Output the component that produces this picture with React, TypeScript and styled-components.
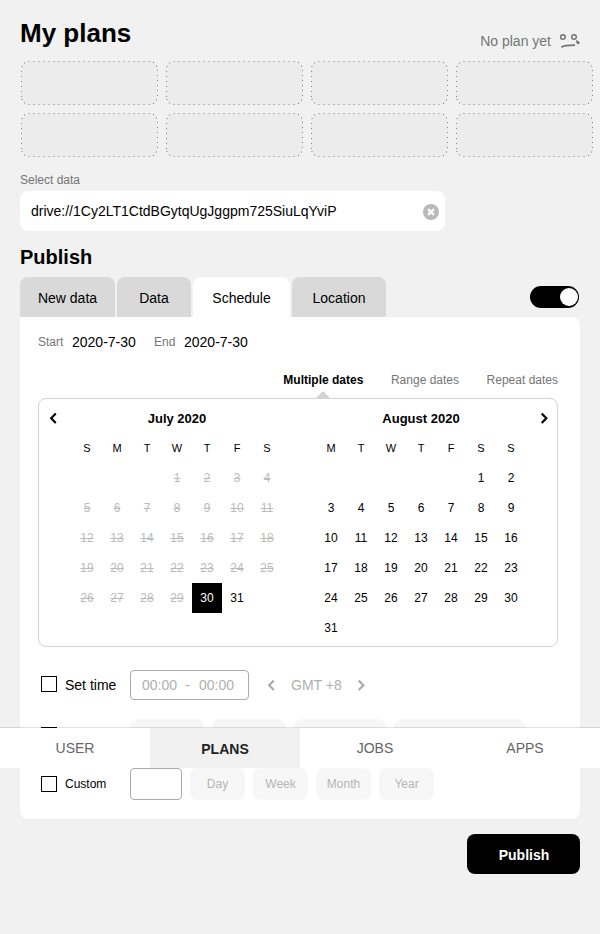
import React from 'react';
import styled, { createGlobalStyle } from 'styled-components';

const GlobalStyle = createGlobalStyle`
  *, *::before, *::after { box-sizing: border-box; }
  body { margin: 0; background: #f1f1f1; color: #000; font: 14px/20px "Liberation Sans", Arial, sans-serif; }
  button, h1, h2, h3 { font: inherit; margin: 0; padding: 0; border: 0; background: none; color: inherit; }
`;

const Page = styled.main`
  position: relative;
  width: 600px;
  height: 934px;
  padding: 18px 20px 0;
  overflow: hidden;
`;

const Header = styled.header`
  display: flex;
  justify-content: space-between;
  height: 43px;
`;

const Title = styled.h1`
  && { font-size: 26px; font-weight: bold; line-height: 30px; }
`;

const EmptyNote = styled.div`
  display: flex;
  color: #757575;
  padding-top: 13px;
  gap: 9px;
  svg { margin-top: 2px; }
`;

const SlotGrid = styled.section`
  display: grid;
  grid-template-columns: repeat(4, 137px);
  grid-auto-rows: 44px;
  gap: 8px;
  margin-left: 1px;
`;

const Slot = styled.div`
  background: #ececec;
  border-radius: 8px;
  svg { display: block; }
`;

const FieldLabel = styled.label`
  display: block;
  margin-top: 14px;
  font-size: 12px;
  line-height: 18px;
  color: #757575;
`;

const DataField = styled.div`
  display: flex;
  align-items: center;
  justify-content: space-between;
  width: 425px;
  height: 40px;
  margin-top: 2px;
  padding: 0 6px 0 11px;
  border-radius: 8px;
  background: #fff;
  svg { margin-top: 2px; }
`;

const SectionTitle = styled.h2`
  && { margin-top: 14px; font-size: 20px; font-weight: bold; line-height: 24px; }
`;

const TabBar = styled.div`
  display: flex;
  gap: 2px;
  height: 40px;
  margin-top: 8px;
`;

const Tab = styled.button<{ $w: number; $active?: boolean }>`
  && {
    width: ${p => p.$w}px;
    padding-top: 2px;
    border-radius: 8px 8px 0 0;
    background: ${p => (p.$active ? '#fff' : '#d9d9d9')};
  }
`;

const Toggle = styled.div`
  display: flex;
  justify-content: flex-end;
  width: 49px;
  height: 22px;
  margin: 9px 1px 0 auto;
  padding: 2px 1.5px;
  border-radius: 11px;
  background: #000;
`;

const Knob = styled.div`
  width: 18px;
  height: 18px;
  border-radius: 50%;
  background: #fff;
`;

const Panel = styled.section`
  height: 502px;
  padding: 15px 22px 0 18px;
  border-radius: 0 8px 8px 8px;
  background: #fff;
`;

const DateSummary = styled.div`
  display: flex;
  line-height: 20px;
`;

const Caption = styled.span<{ $w: number }>`
  width: ${p => p.$w}px;
  font-size: 12px;
  color: #757575;
`;

const DateValue = styled.span`
  width: 82px;
`;

const Modes = styled.div`
  display: flex;
  justify-content: flex-end;
  gap: 27.6px;
  height: 46px;
  padding-top: 18px;
  font-size: 12px;
`;

const Mode = styled.button<{ $active?: boolean }>`
  && {
    position: relative;
    height: 20px;
    color: ${p => (p.$active ? '#000' : '#757575')};
    font-weight: ${p => (p.$active ? 'bold' : 'normal')};
  }
  &::after {
    content: ${p => (p.$active ? '""' : 'none')};
    position: absolute;
    left: 50%;
    top: 21px;
    transform: translateX(-50%);
    border: 7px solid transparent;
    border-top: 0;
    border-bottom-color: #d3d3d3;
  }
`;

const Calendar = styled.div`
  display: flex;
  width: 520px;
  height: 249px;
  padding: 4px 7px 3px 8px;
  border: 1px solid #d3d3d3;
  border-radius: 8px;
`;

const Arrow = styled.button`
  && { display: block; width: 12px; height: 30px; }
  svg { display: block; }
`;

const Months = styled.div`
  display: flex;
  gap: 34px;
  margin: 0 auto 0 13px;
`;

const MonthName = styled.h3`
  && { height: 30px; font-size: 13px; font-weight: bold; line-height: 32px; text-align: center; }
`;

const MonthGrid = styled.div`
  display: grid;
  grid-template-columns: repeat(7, 30px);
  grid-auto-rows: 30px;
  text-align: center;
  font-size: 12px;
  line-height: 30px;
`;

const Weekday = styled.span`
  font-size: 11px;
`;

const Day = styled.span<{ $col?: number; $past?: boolean; $selected?: boolean }>`
  grid-column-start: ${p => p.$col ?? 'auto'};
  color: ${p => (p.$selected ? '#fff' : p.$past ? '#bbb' : '#000')};
  background: ${p => (p.$selected ? '#000' : 'transparent')};
  text-decoration: ${p => (p.$past ? 'line-through' : 'none')};
`;

const OptionRow = styled.div<{ $top: number; $h: number }>`
  display: flex;
  align-items: center;
  height: ${p => p.$h}px;
  margin-top: ${p => p.$top}px;
  padding-left: 3px;
`;

const Check = styled.span<{ $raised?: boolean }>`
  width: 16px;
  height: 16px;
  margin-bottom: ${p => (p.$raised ? 2 : 0)}px;
  border: 1px solid #000;
`;

const OptionLabel = styled.span<{ $small?: boolean }>`
  width: 65px;
  margin-left: 8px;
  font-size: ${p => (p.$small ? 12 : 14)}px;
`;

const TimeBox = styled.div`
  display: flex;
  align-items: center;
  width: 119px;
  height: 30px;
  margin-right: 16px;
  padding-left: 11px;
  border: 1px solid #aaa;
  border-radius: 4px;
  color: #b0b0b0;
  white-space: pre;
`;

const Dash = styled.span`
  width: 22px;
  padding-right: 1px;
  text-align: center;
`;

const Zone = styled.span`
  width: 64px;
  margin: 0 0 0 14px;
  color: #b0b0b0;
`;

const CountBox = styled.div`
  width: 52px;
  height: 32px;
  border: 1px solid #aaa;
  border-radius: 4px;
`;

const Pills = styled.div<{ $indent?: boolean }>`
  display: flex;
  gap: 8px;
  margin-left: ${p => (p.$indent ? 0 : 8)}px;
`;

const Pill = styled.button<{ $w: number }>`
  && {
    width: ${p => p.$w}px;
    height: 32px;
    border-radius: 8px;
    background: #f7f7f7;
    color: #b5b5b5;
    font-size: 12px;
  }
`;

const PublishButton = styled.button`
  && {
    display: block;
    width: 113px;
    height: 40px;
    margin: 15px 0 0 auto;
    padding: 2px 0 0 1px;
    border-radius: 8px;
    background: #000;
    color: #fff;
    font-weight: bold;
  }
`;

const BottomNav = styled.nav`
  position: absolute;
  left: 0;
  top: 728px;
  display: flex;
  width: 100%;
  height: 40px;
  box-shadow: 0 -1px 0 rgba(0, 0, 0, 0.12);
  background: #fff;
`;

const NavItem = styled.button<{ $active?: boolean }>`
  && {
    flex: 1;
    color: ${p => (p.$active ? '#222' : '#666')};
    background: ${p => (p.$active ? '#f1f1f1' : '#fff')};
    font-weight: ${p => (p.$active ? 'bold' : 'normal')};
    padding-top: ${p => (p.$active ? 2 : 0)}px;
  }
`;

const SadFace = () => (
  <svg width="20" height="16" viewBox="0 0 20 16" fill="none" stroke="#757575" strokeWidth="1.5">
    <circle cx="2.9" cy="4" r="2.3" />
    <circle cx="14" cy="4" r="2.3" />
    <path d="M1.3 14.2C4 12.2 8 12.1 15 12.1" strokeWidth="1.7" />
    <path d="M16.1 7.3c1.9.3 3.6 1.4 3.6 2.7-.2 1.7-3.1 1.4-3.4-.4z" fill="#757575" stroke="none" />
  </svg>
);

const SlotOutline = () => (
  <svg width="137" height="44" viewBox="0 0 137 44" fill="none">
    <g stroke="#b9b9b9" strokeDasharray="2 3">
      <path d="M7 .5H132M7 43.5H132" />
    </g>
    <g stroke="#858585" strokeDasharray="1 4">
      <path d="M.5 10V36M136.5 9V36" />
    </g>
    <g fill="#b5b5b5">
      <path d="M3 1h1v2h-1zM0 5h2v1h-2zM0 38h2v1h-2zM3 41h1v2h-1zM135 4h1v2h-1zM135 38h1v2h-1z" />
    </g>
    <path d="M132 1h1v1h-1zM132 42h1v1h-1z" fill="#777" />
  </svg>
);

const ClearIcon = () => (
  <svg width="16" height="16" viewBox="0 0 16 16">
    <circle cx="8" cy="8" r="8" fill="#b9b9b9" />
    <path d="M5.1 5.1l5.8 5.8M10.9 5.1l-5.8 5.8" stroke="#fff" strokeWidth="2.3" />
  </svg>
);

const Chevron = ({ right, muted }: { right?: boolean; muted?: boolean }) => (
  <svg width="12" height="30" viewBox="0 0 12 30" fill="none" stroke={muted ? '#aaa' : '#000'} strokeWidth="2.2">
    <path d={right ? 'M3.7 10.5l4.6 4.7-4.6 4.7' : 'M8.8 10.5l-4.6 4.7 4.6 4.7'} />
  </svg>
);

interface MonthProps {
  name: string;
  weekdays: string;
  firstColumn: number;
  today?: number;
}

const Month = ({ name, weekdays, firstColumn, today = 0 }: MonthProps) => (
  <div>
    <MonthName>{name}</MonthName>
    <MonthGrid>
      {weekdays.split('').map((d, i) => <Weekday key={i}>{d}</Weekday>)}
      {Array.from({ length: 31 }, (_, i) => i + 1).map(d => (
        <Day key={d} $col={d === 1 ? firstColumn : undefined} $past={d < today} $selected={d === today}>{d}</Day>
      ))}
    </MonthGrid>
  </div>
);

export default function App() {
  return (
    <>
      <GlobalStyle />
      <Page>
        <Header>
          <Title>My plans</Title>
          <EmptyNote>No plan yet <SadFace /></EmptyNote>
        </Header>
        <SlotGrid>
          {Array.from({ length: 8 }, (_, i) => <Slot key={i}><SlotOutline /></Slot>)}
        </SlotGrid>
        <FieldLabel>Select data</FieldLabel>
        <DataField>
          <span>drive://1Cy2LT1CtdBGytqUgJggpm725SiuLqYviP</span>
          <ClearIcon />
        </DataField>
        <SectionTitle>Publish</SectionTitle>
        <TabBar>
          <Tab $w={95}>New data</Tab>
          <Tab $w={74}>Data</Tab>
          <Tab $w={97} $active>Schedule</Tab>
          <Tab $w={94}>Location</Tab>
          <Toggle><Knob /></Toggle>
        </TabBar>
        <Panel>
          <DateSummary>
            <Caption $w={34}>Start</Caption><DateValue>2020-7-30</DateValue>
            <Caption $w={30}>End</Caption><DateValue>2020-7-30</DateValue>
          </DateSummary>
          <Modes>
            <Mode $active>Multiple dates</Mode>
            <Mode>Range dates</Mode>
            <Mode>Repeat dates</Mode>
          </Modes>
          <Calendar>
            <Arrow><Chevron /></Arrow>
            <Months>
              <Month name="July 2020" weekdays="SMTWTFS" firstColumn={4} today={30} />
              <Month name="August 2020" weekdays="MTWTFSS" firstColumn={6} />
            </Months>
            <Arrow><Chevron right /></Arrow>
          </Calendar>
          <OptionRow $top={23} $h={30}>
            <Check $raised />
            <OptionLabel>Set time</OptionLabel>
            <TimeBox><span>00:00</span><Dash>-</Dash><span>00:00</span></TimeBox>
            <Chevron muted />
            <Zone>GMT +8</Zone>
            <Chevron right muted />
          </OptionRow>
          <OptionRow $top={19} $h={32}>
            <Check />
            <OptionLabel $small />
            <Pills $indent>
              <Pill $w={74} /><Pill $w={74} /><Pill $w={92} /><Pill $w={131} />
            </Pills>
          </OptionRow>
          <OptionRow $top={17} $h={32}>
            <Check />
            <OptionLabel $small>Custom</OptionLabel>
            <CountBox />
            <Pills>
              <Pill $w={55}>Day</Pill>
              <Pill $w={55}>Week</Pill>
              <Pill $w={55}>Month</Pill>
              <Pill $w={55}>Year</Pill>
            </Pills>
          </OptionRow>
        </Panel>
        <PublishButton>Publish</PublishButton>
        <BottomNav>
          <NavItem>USER</NavItem>
          <NavItem $active>PLANS</NavItem>
          <NavItem>JOBS</NavItem>
          <NavItem>APPS</NavItem>
        </BottomNav>
      </Page>
    </>
  );
}
